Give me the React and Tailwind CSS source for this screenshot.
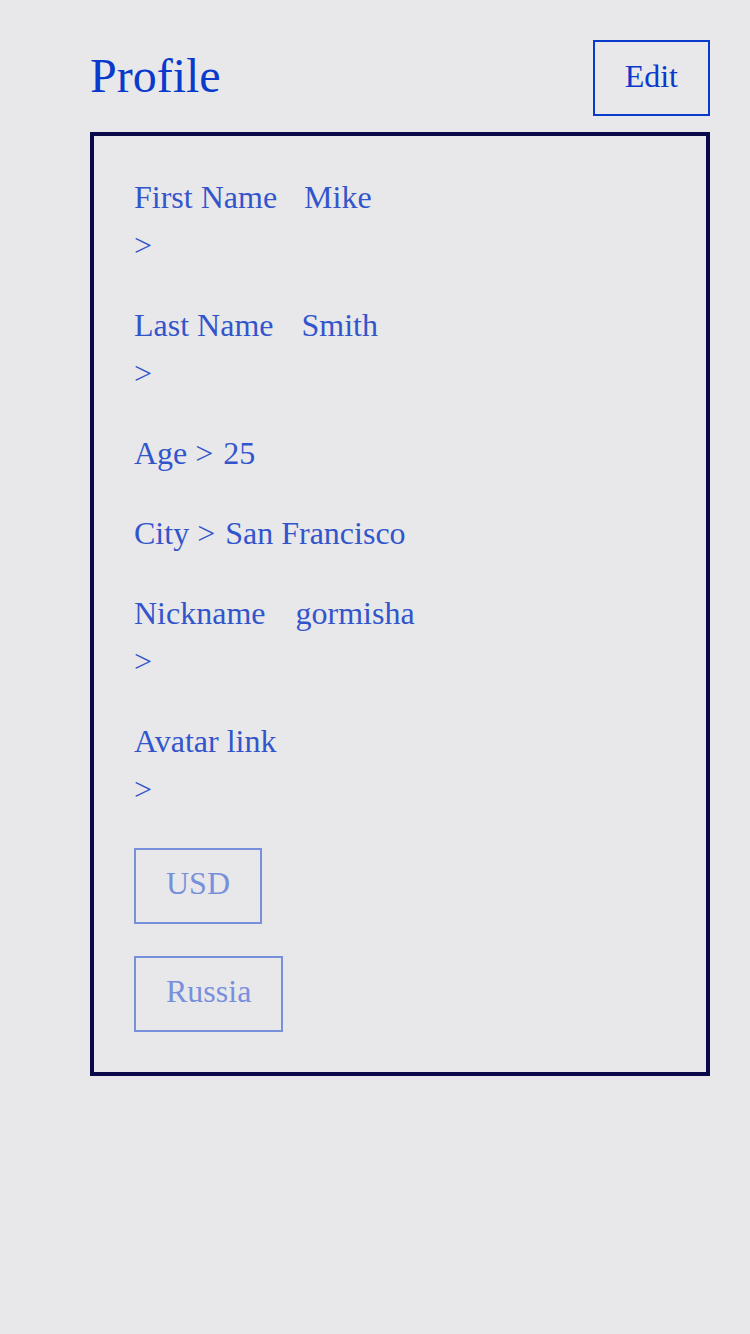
const rows = [
  { label: "First Name", value: "Mike", split: true, gap: "ml-[27px]" },
  { label: "Last Name", value: "Smith", split: true, gap: "ml-[28px]" },
  { label: "Age", value: "25" },
  { label: "City", value: "San Francisco" },
  { label: "Nickname", value: "gormisha", split: true, gap: "ml-[30px]" },
  { label: "Avatar link", value: "", split: true, gap: "" },
];

function Row({ label, value, split, gap }) {
  if (!split) {
    return (
      <div className="leading-[48px]">
        {label} &gt; <span className="ml-[2px]">{value}</span>
      </div>
    );
  }
  return (
    <div className="leading-[48px]">
      <div>
        <span>{label}</span>
        {value && <span className={gap}>{value}</span>}
      </div>
      <div>&gt;</div>
    </div>
  );
}

export default function App() {
  return (
    <div
      className="min-h-screen bg-[#e8e8ea] pl-[90px] pr-[40px] pt-10"
      style={{ fontFamily: '"Liberation Serif", serif' }}
    >
      <div className="flex items-center justify-between mb-4">
        <h1 className="text-[48px] leading-[56px] text-[#0a3acc] mb-1">Profile</h1>
        <button className="border-2 border-[#0a3acc] px-[30px] pt-[10px] pb-[14px] text-[32px] leading-[48px] text-[#0a3acc]">
          Edit
        </button>
      </div>

      <div className="border-4 border-[#0a0a4a] pl-10 pr-10 pt-[37px] pb-10 text-[32px] text-[#3355cc]">
        <div className="flex flex-col gap-8">
          {rows.map((r) => (
            <Row key={r.label} {...r} />
          ))}
        </div>

        <div className="flex flex-col items-start gap-8 mt-[35px]">
          <button className="border-2 border-[#7890dc] px-[30px] pt-[9px] pb-[15px] text-[32px] leading-[48px] text-[#7890dc]">
            USD
          </button>
          <button className="border-2 border-[#7890dc] px-[30px] pt-[9px] pb-[15px] text-[32px] leading-[48px] text-[#7890dc]">
            Russia
          </button>
        </div>
      </div>
    </div>
  );
}
